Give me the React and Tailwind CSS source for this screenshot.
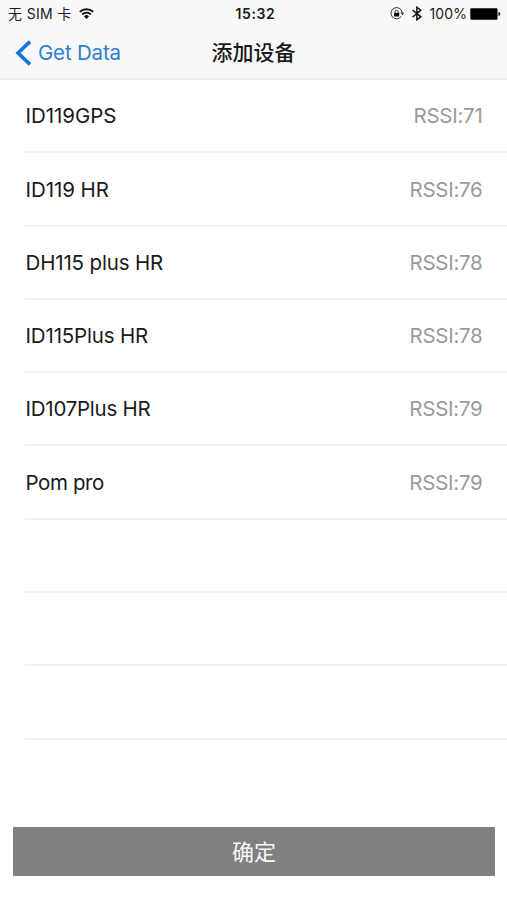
const devices = [
  { name: "ID119GPS", rssi: 71, tracking: "tracking-[-0.05px]" },
  { name: "ID119 HR", rssi: 76, tracking: "tracking-[-0.07px]" },
  { name: "DH115 plus HR", rssi: 78, tracking: "tracking-[-0.15px]" },
  { name: "ID115Plus HR", rssi: 78, tracking: "tracking-[-0.17px]" },
  { name: "ID107Plus HR", rssi: 79, tracking: "tracking-[-0.25px]" },
  { name: "Pom pro", rssi: 79, tracking: "tracking-[-0.4px]" },
];

function WifiIcon() {
  return (
    <svg width="15" height="12" viewBox="0 0 15 12" fill="none" stroke="#111" strokeWidth="1.9">
      <path d="M0.8 3.9a9.6 9.6 0 0 1 13.4 0" />
      <path d="M3.1 6.4a6.3 6.3 0 0 1 8.8 0" />
      <path d="M7.5 11L5 8.2a3.6 3.6 0 0 1 5 0z" fill="#111" stroke="none" />
    </svg>
  );
}

function RotationLockIcon() {
  return (
    <svg width="15" height="13" viewBox="0 0 15 13" fill="none" stroke="#333">
      <path d="M11.2 9.3A5.6 5.6 0 1 1 12.1 5.5" strokeWidth="1" />
      <path d="M10.6 5.6h3.6l-1.8 2.6z" fill="#222" stroke="none" />
      <rect x="4" y="5.8" width="5.2" height="3.8" rx="0.4" fill="#111" stroke="none" />
      <path d="M5 6V4.9a1.6 1.6 0 0 1 3.2 0V6" strokeWidth="0.9" />
    </svg>
  );
}

function BluetoothIcon() {
  return (
    <svg width="10" height="15" viewBox="0 0 10 15" fill="none" stroke="#111" strokeWidth="1.5">
      <path d="M0.6 4l8.2 6.8-3.9 3V1.2l3.9 3-8.2 6.8" />
    </svg>
  );
}

function BatteryIcon() {
  return (
    <svg width="31" height="12" viewBox="0 0 31 12">
      <rect x="0.3" y="0.3" width="27.2" height="11.4" rx="1.2" fill="#000" />
      <path d="M28.4 4c1.4 0.4 1.9 1.1 1.9 2s-0.5 1.6-1.9 2z" fill="#222" />
    </svg>
  );
}

export default function App() {
  return (
    <div className="flex h-[900px] w-full flex-col overflow-hidden bg-white font-['Inter','Noto_Sans_CJK_SC',sans-serif] text-[#1a1a1a]">
      <header className="h-20 shrink-0 border-b-2 border-[#ececec] bg-[#f8f8f8]">
        <div className="grid h-[27px] grid-cols-[1fr_auto_1fr] items-center pl-2 pr-[6px] text-[14px] leading-[27px]">
          <div className="flex items-center">
            <span className="whitespace-pre tracking-[0.35px]">无 SIM 卡</span>
            <span className="ml-[7px]"><WifiIcon /></span>
          </div>
          <span className="pl-[2px] text-[14px] font-semibold tracking-[0.6px]">15:32</span>
          <div className="flex items-center justify-end">
            <RotationLockIcon />
            <span className="ml-[7px]"><BluetoothIcon /></span>
            <span className="ml-[7px] tracking-[0.1px]">100%</span>
            <span className="ml-[3px]"><BatteryIcon /></span>
          </div>
        </div>
        <div className="grid h-[51px] grid-cols-[1fr_auto_1fr] items-center pl-[15px] pr-[15px]">
          <button className="flex items-center text-[20.5px] leading-6 text-[#2f7fd0]">
            <svg width="17" height="26" viewBox="0 0 17 26" fill="none" stroke="#1475df" strokeWidth="3.6">
              <path d="M15 1.6L3 13 15 24.4" />
            </svg>
            <span className="ml-[6px] tracking-[-0.18px]">Get Data</span>
          </button>
          <h1 className="text-[21px] font-medium leading-6">添加设备</h1>
          <span />
        </div>
      </header>

      <ul>
        {devices.map((d) => (
          <li
            key={d.name}
            className="ml-[25px] flex h-[73.3px] items-center justify-between border-b-2 border-[#f2f2f2] pl-[0.5px] pr-[24.5px] pt-[2px] text-[20.5px]"
          >
            <span className={d.tracking}>{d.name}</span>
            <span className="tracking-[-0.27px] text-[#9a9a9a]">RSSI:{d.rssi}</span>
          </li>
        ))}
        {[0, 1, 2].map((i) => (
          <li key={i} className="ml-[25px] h-[73.3px] border-b-2 border-[#f2f2f2]" />
        ))}
      </ul>

      <button className="mx-[13px] mb-6 mt-auto h-[49px] w-[482px] shrink-0 bg-[#808080] pt-px text-[22px] text-[#f8f8f8]">
        确定
      </button>
    </div>
  );
}
